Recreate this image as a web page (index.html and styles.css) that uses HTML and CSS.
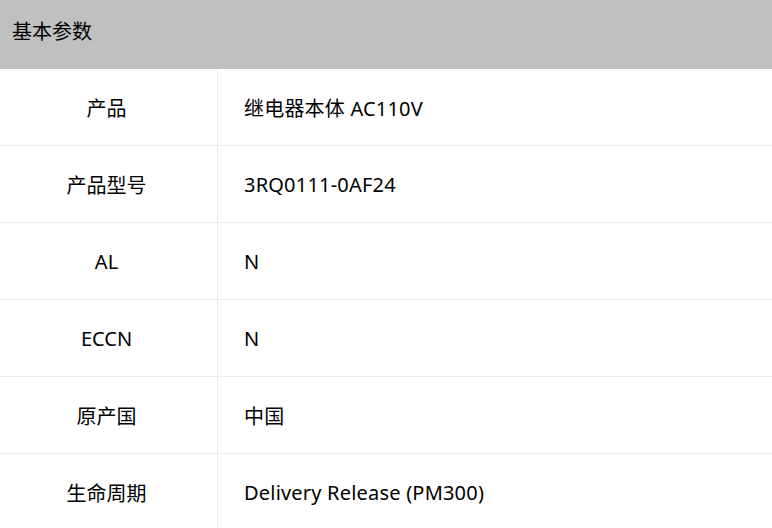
FILE: index.html
```html
<!DOCTYPE html>
<html lang="zh">
<head>
<meta charset="utf-8">
<link rel="stylesheet" href="styles.css">
</head>
<body>
<div class="panel">
  <div class="head">基本参数</div>
  <div class="row"><div class="k">产品</div><div class="v">继电器本体 AC110V</div></div>
  <div class="row"><div class="k">产品型号</div><div class="v">3RQ0111-0AF24</div></div>
  <div class="row"><div class="k">AL</div><div class="v">N</div></div>
  <div class="row"><div class="k">ECCN</div><div class="v">N</div></div>
  <div class="row"><div class="k">原产国</div><div class="v">中国</div></div>
  <div class="row"><div class="k">生命周期</div><div class="v">Delivery Release (PM300)</div></div>
</div>
</body>
</html>
```
FILE: styles.css
```css
html, body { margin: 0; padding: 0; background: #fff; }
body {
  font-family: "Noto Sans", "Noto Sans CJK SC", sans-serif;
  font-size: 20px;
  color: #000;
  overflow: hidden;
}
.panel { width: 772px; }
.head {
  height: 69px;
  background: #c0c0c0;
  padding: 18px 0 0 12px;
  line-height: 28px;
  box-sizing: border-box;
}
.row {
  display: flex;
  height: 77px;
  border-bottom: 1px solid #ececec;
  box-sizing: border-box;
}
.k {
  width: 218px;
  padding-right: 4px;
  box-sizing: border-box;
  border-right: 1px solid #ececec;
  display: flex;
  align-items: center;
  justify-content: center;
  flex-shrink: 0;
}
.v {
  display: flex;
  align-items: center;
  padding-left: 26px;
  letter-spacing: 0.2px;
}
```
